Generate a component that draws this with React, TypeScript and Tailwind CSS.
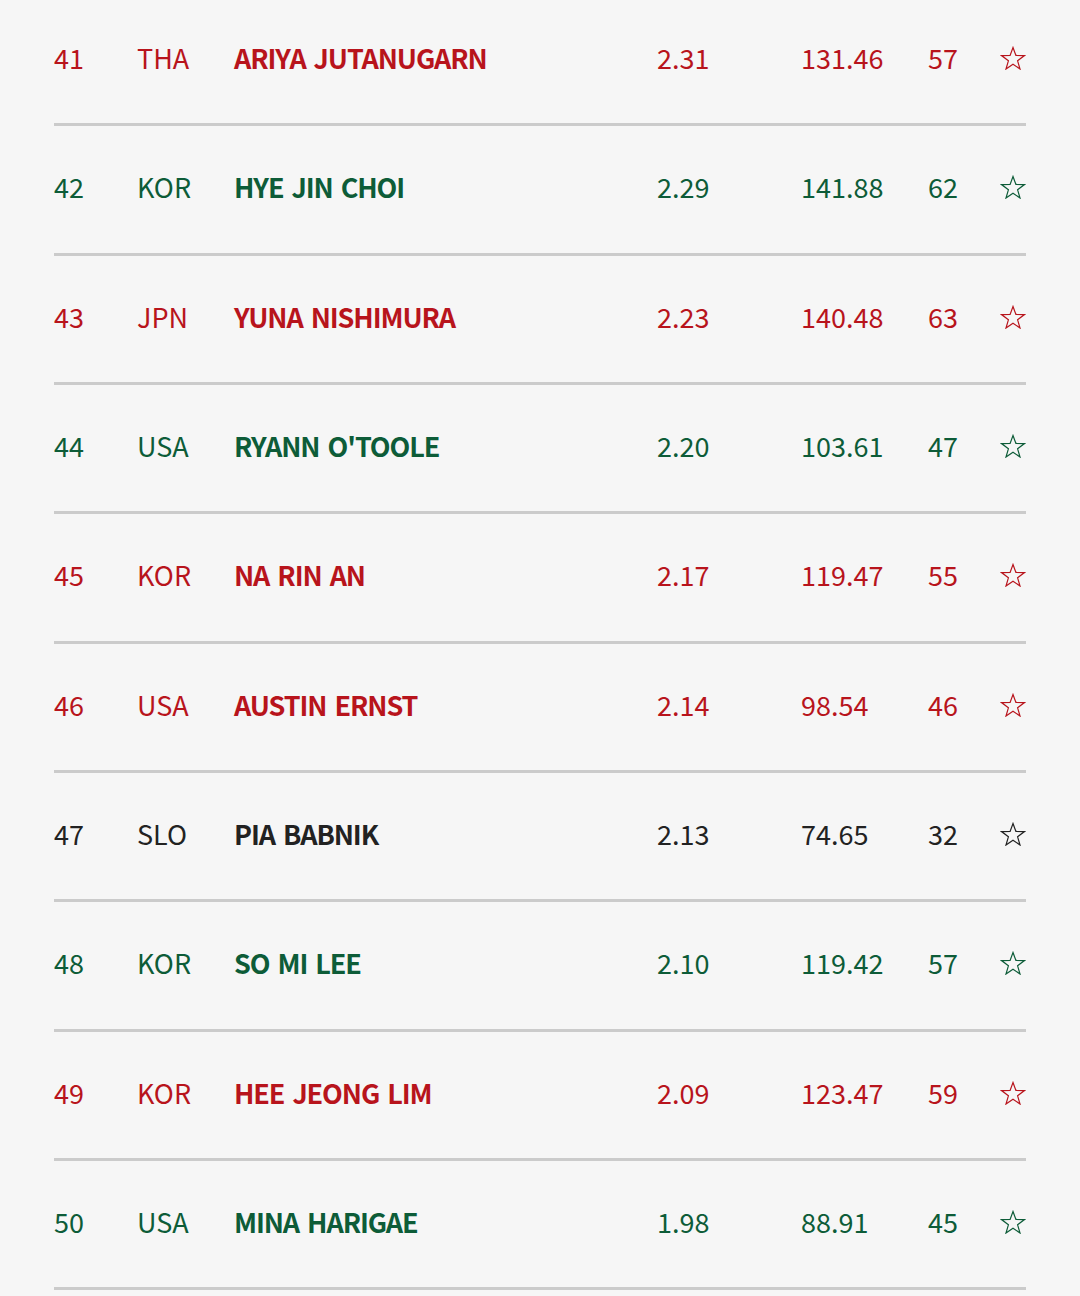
import React from 'react';

type Row = {
  rank: number;
  nat: string;
  name: string;
  avg: string;
  pts: string;
  events: number;
  tone: 'red' | 'green' | 'dark';
};

const rows: Row[] = [
  { rank: 41, nat: 'THA', name: 'ARIYA JUTANUGARN', avg: '2.31', pts: '131.46', events: 57, tone: 'red' },
  { rank: 42, nat: 'KOR', name: 'HYE JIN CHOI', avg: '2.29', pts: '141.88', events: 62, tone: 'green' },
  { rank: 43, nat: 'JPN', name: 'YUNA NISHIMURA', avg: '2.23', pts: '140.48', events: 63, tone: 'red' },
  { rank: 44, nat: 'USA', name: "RYANN O'TOOLE", avg: '2.20', pts: '103.61', events: 47, tone: 'green' },
  { rank: 45, nat: 'KOR', name: 'NA RIN AN', avg: '2.17', pts: '119.47', events: 55, tone: 'red' },
  { rank: 46, nat: 'USA', name: 'AUSTIN ERNST', avg: '2.14', pts: '98.54', events: 46, tone: 'red' },
  { rank: 47, nat: 'SLO', name: 'PIA BABNIK', avg: '2.13', pts: '74.65', events: 32, tone: 'dark' },
  { rank: 48, nat: 'KOR', name: 'SO MI LEE', avg: '2.10', pts: '119.42', events: 57, tone: 'green' },
  { rank: 49, nat: 'KOR', name: 'HEE JEONG LIM', avg: '2.09', pts: '123.47', events: 59, tone: 'red' },
  { rank: 50, nat: 'USA', name: 'MINA HARIGAE', avg: '1.98', pts: '88.91', events: 45, tone: 'green' },
];

const toneClass = {
  red: 'text-[#b8141c]',
  green: 'text-[#0d5c38]',
  dark: 'text-[#222222]',
};

function Star() {
  return (
    <svg width="26" height="24" viewBox="0 0 26 24" fill="none" stroke="currentColor" strokeWidth="1.2" strokeLinejoin="miter">
      <polygon points="13,1.5 15.9,9.4 24.4,9.6 17.6,14.8 20,23 13,18.2 6,23 8.4,14.8 1.6,9.6 10.1,9.4" />
    </svg>
  );
}

export default function App() {
  return (
    <div
      className="min-h-[1296px] bg-[#f6f6f6] px-[54px] overflow-hidden"
      style={{ fontFamily: '"Noto Sans CJK KR", "Noto Sans", sans-serif' }}
    >
      <div className="-mt-[3px]">
        {rows.map((r) => (
          <div
            key={r.rank}
            className={`grid grid-cols-[83px_97px_423px_144px_127px_72px_26px] items-center h-[129.33px] pb-[4px] border-b-[3px] border-[#cbcbcb] text-[27px] ${toneClass[r.tone]}`}
          >
            <span>{r.rank}</span>
            <span>{r.nat}</span>
            <span className="font-bold tracking-[-1.1px] [word-spacing:3px]">{r.name}</span>
            <span>{r.avg}</span>
            <span>{r.pts}</span>
            <span>{r.events}</span>
            <span className="flex items-center justify-end">
              <Star />
            </span>
          </div>
        ))}
      </div>
    </div>
  );
}
